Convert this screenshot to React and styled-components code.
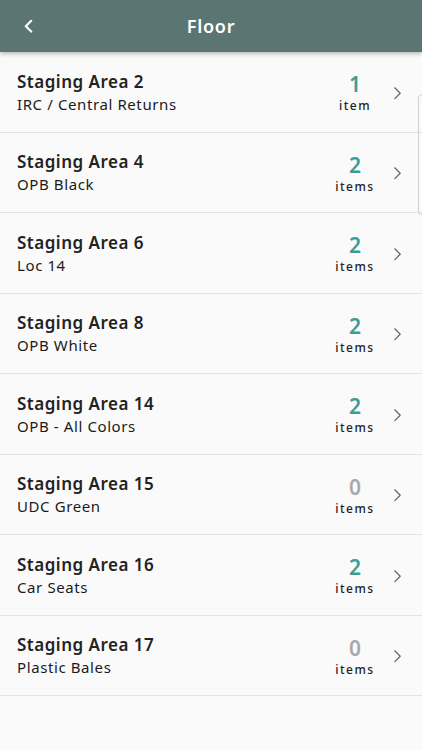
import React from "react";
import styled, { createGlobalStyle } from "styled-components";

const areas = [
  { name: "Staging Area 2", desc: "IRC / Central Returns", count: 1 },
  { name: "Staging Area 4", desc: "OPB Black", count: 2 },
  { name: "Staging Area 6", desc: "Loc 14", count: 2 },
  { name: "Staging Area 8", desc: "OPB White", count: 2 },
  { name: "Staging Area 14", desc: "OPB - All Colors", count: 2 },
  { name: "Staging Area 15", desc: "UDC Green", count: 0 },
  { name: "Staging Area 16", desc: "Car Seats", count: 2 },
  { name: "Staging Area 17", desc: "Plastic Bales", count: 0 },
];

function Chevron({ left, color, size = 10 }) {
  return (
    <svg width={size} height={size * 1.6} viewBox="0 0 10 16">
      <path
        d={left ? "M8 2 L2 8 L8 14" : "M2 2 L8 8 L2 14"}
        fill="none"
        stroke={color}
        strokeWidth={left ? 2.4 : 1.4}
        strokeLinecap="round"
        strokeLinejoin="round"
      />
    </svg>
  );
}

export default function App() {
  return (
    <>
      <GlobalStyle />
      <Screen>
        <Header>
          <BackButton>
            <Chevron left color="#fff" size={9} />
          </BackButton>
          <Title>Floor</Title>
        </Header>
        <List>
          {areas.map((a) => (
            <Row key={a.name}>
              <Info>
                <Name>{a.name}</Name>
                <Desc>{a.desc}</Desc>
              </Info>
              <Count>
                <Number empty={a.count === 0}>{a.count}</Number>
                <Unit>{a.count === 1 ? "item" : "items"}</Unit>
              </Count>
              <Arrow>
                <Chevron color="#666" size={9} />
              </Arrow>
            </Row>
          ))}
        </List>
        <ScrollHint />
      </Screen>
    </>
  );
}

const GlobalStyle = createGlobalStyle`
  body {
    margin: 0;
    background: #fafafa;
    font-family: "Noto Sans", "Open Sans", sans-serif;
  }
`;

const Screen = styled.div`
  position: relative;
  width: 422px;
  height: 750px;
  overflow: hidden;
  background: #fafafa;
`;

const Header = styled.div`
  position: relative;
  z-index: 2;
  height: 52px;
  background: #5b7573;
  display: flex;
  align-items: center;
  justify-content: center;
  box-shadow: 0 2px 4px rgba(0, 0, 0, 0.25);
`;

const BackButton = styled.div`
  position: absolute;
  left: 24px;
  top: 19px;
  display: flex;
`;

const Title = styled.div`
  color: #fff;
  font-size: 18px;
  font-weight: 600;
  letter-spacing: 0.7px;
`;

const List = styled.div`
  display: flex;
  flex-direction: column;
`;

const Row = styled.div`
  box-sizing: border-box;
  height: 80.5px;
  display: flex;
  align-items: center;
  padding: 0 20px 0 17px;
  border-bottom: 1px solid #e4e4e4;
`;

const Info = styled.div`
  flex: 1;
  display: flex;
  flex-direction: column;
  gap: 1px;
`;

const Name = styled.div`
  font-size: 17px;
  font-weight: 600;
  color: #222;
  letter-spacing: 0.5px;
`;

const Desc = styled.div`
  font-size: 15px;
  font-weight: 400;
  color: #1a1a1a;
  letter-spacing: 0.6px;
`;

const Count = styled.div`
  width: 50px;
  display: flex;
  flex-direction: column;
  align-items: center;
  margin-right: 13px;
  margin-top: 4px;
`;

const Number = styled.div`
  font-size: 21px;
  font-weight: 600;
  line-height: 22px;
  color: ${(p) => (p.empty ? "#a8a8a8" : "#3c9d95")};
`;

const Unit = styled.div`
  font-size: 12px;
  font-weight: 500;
  letter-spacing: 1.5px;
  color: #222;
  margin-top: 2px;
`;

const Arrow = styled.div`
  display: flex;
  margin-top: 2px;
`;

const ScrollHint = styled.div`
  position: absolute;
  top: 94px;
  right: -4px;
  width: 8px;
  height: 121px;
  border: 1px solid #cfcfcf;
  border-radius: 4px;
  box-sizing: border-box;
`;
